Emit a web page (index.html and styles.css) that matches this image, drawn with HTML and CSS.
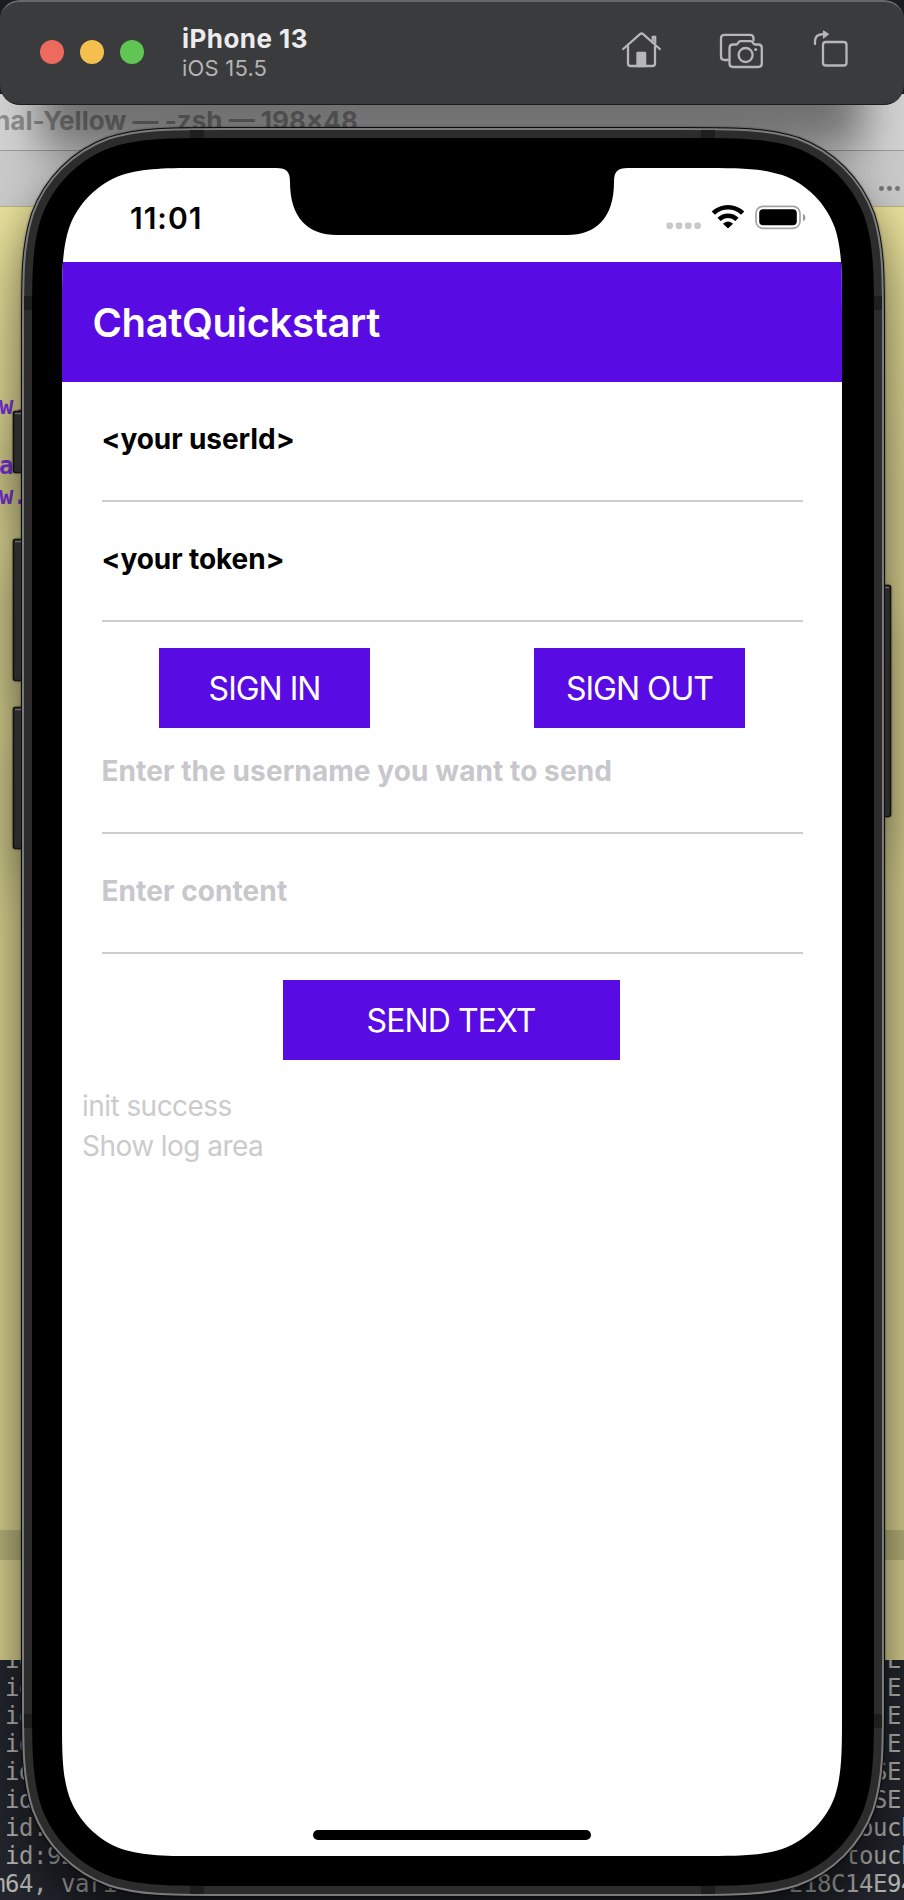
FILE: index.html
```html
<!DOCTYPE html>
<html lang="en">
<head>
<meta charset="utf-8">
<title>iPhone 13 – ChatQuickstart</title>
<link rel="stylesheet" href="styles.css">
</head>
<body>
<div class="desktop">
  <section class="console">
    <pre class="console-text console-left"> id
 id
 id
 id
 id
 id
 id:
 id:92
m64, vari</pre>
    <pre class="console-text console-right">       E
       E
       E
       E
      SE
      SE
    touch
    touch
218C14E94</pre>
  </section>

  <section class="terminal">
    <div class="terminal-title"><span class="terminal-name">nal-Yellow — -zsh — 198×48</span></div>
    <div class="terminal-tabs"><i></i><i></i><i></i></div>
    <div class="terminal-body">
      <pre class="terminal-code">w.

a
w.</pre>
      <div class="terminal-row"></div>
    </div>
  </section>

  <div class="toolbar-shadow"></div>

  <svg class="shell" viewBox="0 0 904 1900" width="904" height="1900">
    <defs>
      <path id="body" d="M223.1 138H682.9c55 0 82.5 0 112.1 9.4c32.3 11.8 57.8 37.2 69.6 69.6c9.4 29.6 9.4 57.1 9.4 112.1V1694.9c0 55 0 82.5 -9.4 112.1c-11.8 32.3 -37.2 57.8 -69.6 69.6c-29.6 9.4 -57.1 9.4 -112.1 9.4H223.1c-55 0 -82.5 0 -112.1 -9.4c-32.3 -11.8 -57.8 -37.2 -69.6 -69.6c-9.4 -29.6 -9.4 -57.1 -9.4 -112.1V329.1c0 -55 0 -82.5 9.4 -112.1c11.8 -32.3 37.2 -57.8 69.6 -69.6c29.6 -9.4 57.1 -9.4 112.1 -9.4z"/>
    </defs>
    <g fill="#2b2b2b" stroke="#111" stroke-width="1.5">
      <rect x="13.5" y="411.5" width="14" height="61" rx="2"/>
      <rect x="13.5" y="539.5" width="14" height="141" rx="2"/>
      <rect x="13.5" y="707.5" width="14" height="141" rx="2"/>
      <rect x="878" y="585.5" width="12.5" height="231" rx="2"/>
    </g>
    <path d="M15 413.5h8M15 541.5h8M15 709.5h8M884 587.5h5" stroke="#666" stroke-width="1.5"/>
    <use href="#body" stroke="#0c0c0c" stroke-width="22"/>
    <use href="#body" stroke="#7b7b7b" stroke-width="20"/>
    <use href="#body" stroke="#2c2c2c" stroke-width="16"/>
    <path d="M190 130h14v8h-14zM701 130h14v8h-14zM190 1886h14v8h-14zM701 1886h14v8h-14zM24 296h8v14h-8zM874 296h8v14h-8zM24 1714h8v14h-8zM874 1714h8v14h-8z" fill="#1e1e1e"/>
    <use href="#body" fill="#000"/>
  </svg>

  <main class="screen">
    <div class="status">
      <span class="clock">11:01</span>
      <svg class="status-icons" viewBox="0 0 144 30" width="144" height="30">
        <g fill="#c9c9c9"><rect x="4.500" y="19.500" width="6.400" height="6.400" rx="1.800"/><rect x="13.800" y="19.500" width="6.400" height="6.400" rx="1.800"/><rect x="23.100" y="19.500" width="6.400" height="6.400" rx="1.800"/><rect x="32.400" y="19.500" width="6.400" height="6.400" rx="1.800"/></g>
        <g fill="none" stroke="#000" stroke-width="4.600"><path d="M51.300 10.200a21 21 0 0 1 29.400 0"/><path d="M57 16.300a13 13 0 0 1 18 0"/></g>
        <path d="M61.500 20.800q4.500-3.600 9 0L66 25z" stroke="#000" stroke-linejoin="round"/>
        <rect x="94" y="3.300" width="44" height="22" rx="7" fill="none" stroke="#a3a3a3" stroke-width="1.700"/>
        <rect x="97.200" y="6.300" width="37.600" height="16" rx="4"/>
        <path d="M141 11c3.200 1 3.200 6.200 0 7.200z" fill="#999"/>
      </svg>
    </div>
    <header class="app-bar"><h1>ChatQuickstart</h1></header>
    <form class="form">
      <div class="field"><span>&lt;your userId&gt;</span></div>
      <div class="field"><span>&lt;your token&gt;</span></div>
      <div class="actions">
        <button type="button" class="btn">SIGN IN</button>
        <button type="button" class="btn">SIGN OUT</button>
      </div>
      <div class="field placeholder"><span>Enter the username you want to send</span></div>
      <div class="field placeholder"><span>Enter content</span></div>
      <div class="actions actions-single">
        <button type="button" class="btn btn-wide">SEND TEXT</button>
      </div>
    </form>
    <div class="log">
      <p>init success</p>
      <p>Show log area</p>
    </div>
    <div class="home-indicator"></div>
  </main>

  <div class="toolbar">
    <div class="lights"><i class="red"></i><i class="amber"></i><i class="green"></i></div>
    <div class="device"><strong>iPhone 13</strong><span>iOS 15.5</span></div>
    <svg class="tools" viewBox="612 24 244 52" width="244" height="52" fill="none" stroke="#b7b7b9" stroke-width="2.300" stroke-linecap="round" stroke-linejoin="round">
      <path d="M623.200 49L640 34.200q1.600-1.400 3.200 0L659.800 49"/>
      <path d="M628 46.500V63.500q0 2.500 2.500 2.500h22q2.500 0 2.500-2.500V46.500"/>
      <path d="M652.700 41v-4.200h2.500v6.500" />
      <path d="M637.500 66V53h7.600v13z" fill="#b7b7b9"/>
      <path d="M728 60h-3.500q-3.500 0-3.500-3.500V38.300q0-3.500 3.500-3.500h25.500q3.500 0 3.500 3.500v2"/>
      <path d="M733 44.500h3.200q1 0 1.500-.8l1-1.600q.6-1 1.800-1h10.300q1.200 0 1.800 1l1 1.600q.5.800 1.500.8h3.200q3.500 0 3.500 3.500v15.500q0 3.500-3.500 3.500H733q-3.500 0-3.500-3.500V48q0-3.500 3.500-3.500z"/>
      <circle cx="745.600" cy="55" r="7"/>
      <circle cx="755.600" cy="49.600" r="1.500" fill="#b7b7b9" stroke="none"/>
      <rect x="823" y="42" width="23.500" height="23.500" rx="2.800"/>
      <path d="M815 44v-2.500q0-7.300 8.500-7.300"/>
      <path d="M823.500 31l4.800 3.300l-4.800 3.500z" fill="#b7b7b9" stroke-width="1.200"/>
    </svg>
  </div>
</div>
</body>
</html>
```
FILE: styles.css
```css
* { box-sizing: border-box; }

body {
  margin: 0;
  font-family: Inter, "Liberation Sans", sans-serif;
}

p, h1, pre { margin: 0; }

.desktop {
  position: relative;
  width: 904px;
  height: 1900px;
  overflow: hidden;
  background: #1b1d24;
}

/* Background windows */
.console {
  position: absolute;
  left: 0;
  top: 1652px;
  width: 904px;
  height: 248px;
  overflow: hidden;
  background: #24262e;
}

.console-text {
  position: absolute;
  top: -6px;
  font: 24px/28px "DejaVu Sans Mono", monospace;
  letter-spacing: -0.45px;
  color: #b8b8b4;
}

.console-left { left: -9px; }
.console-right { left: 789px; }

.terminal {
  position: absolute;
  left: 0;
  top: 94px;
  width: 904px;
  height: 1566px;
  display: flex;
  flex-direction: column;
  overflow: hidden;
}

.terminal-title {
  height: 57px;
  background: #d2d2d2;
  border-bottom: 1px solid #9a9a9a;
  display: flex;
}

.terminal-name {
  width: 358px;
  display: flex;
  justify-content: flex-end;
  white-space: nowrap;
  font-size: 26px;
  font-weight: 700;
  line-height: 53px;
  color: #8e8e8e;
}

.terminal-tabs {
  height: 55px;
  background: #cacaca;
  display: flex;
  justify-content: flex-end;
  align-items: flex-start;
  gap: 3.4px;
  padding: 35px 4px 0 0;
}

.terminal-tabs i {
  width: 4.8px;
  height: 4.8px;
  border-radius: 50%;
  background: #777;
}

.terminal-body {
  flex: 1;
  background: linear-gradient(#e9e29c, #d9d290 280px);
  border-top: 1px solid #b9b37c;
  padding-top: 184px;
}

.terminal-code {
  height: 1139px;
  margin-left: -1px;
  font: bold 24px/30px "DejaVu Sans Mono", monospace;
  letter-spacing: -0.45px;
  color: #7a35d8;
}

.terminal-row {
  height: 30px;
  background: rgba(0, 0, 0, 0.14);
}

.toolbar-shadow {
  position: absolute;
  left: 40px;
  top: 20px;
  width: 824px;
  height: 130px;
  background: rgba(0, 0, 0, 0.46);
  filter: blur(22px);
}

/* Simulated device */
.shell {
  position: absolute;
  left: 0;
  top: 0;
  filter: drop-shadow(0 0 1px rgba(0, 0, 0, 0.5)) drop-shadow(0 30px 26px rgba(0, 0, 0, 0.6));
}

.screen {
  position: absolute;
  left: 62px;
  top: 168px;
  width: 780px;
  height: 1688px;
  display: flex;
  flex-direction: column;
  background: #fff;
  clip-path: path("M144.8 0H214C225 0 228 4 228 14C228 50 246 67 275 67H505C534 67 552 50 552 14C552 4 555 0 566 0H635.2c41.7 0 62.5 0 85 7.1c24.5 8.9 43.800 28.2 52.7 52.7c7.1 22.4 7.1 43.3 7.1 85V1543.2c0 41.7 0 62.5 -7.1 85c-8.9 24.5 -28.2 43.8 -52.7 52.7c-22.4 7.1 -43.3 7.1 -85 7.1H144.8c-41.7 0 -62.5 0 -85 -7.1c-24.5 -8.9 -43.8 -28.2 -52.7 -52.7c-7.1 -22.4 -7.1 -43.3 -7.1 -85V144.8c0 -41.7 0 -62.5 7.1 -85c8.9 -24.5 28.2 -43.8 52.7 -52.7c22.4 -7.1 43.3 -7.1 85 -7.1z");
}

.status {
  height: 94px;
  display: flex;
  justify-content: space-between;
  padding: 35px 36px 0 68px;
}

.clock {
  font-size: 30px;
  font-weight: 600;
  line-height: 30px;
  letter-spacing: 1px;
}

.app-bar {
  height: 120px;
  padding-left: 30.5px;
  background: #590be4;
  color: #fff;
}

.app-bar h1 {
  font-size: 40px;
  font-weight: 600;
  line-height: 121px;
  letter-spacing: -0.4px;
}

.field {
  height: 120px;
  margin: 0 39px 0 39.5px;
  border-bottom: 2px solid #cecece;
  padding-top: 40px;
  font-size: 28px;
  font-weight: 700;
  line-height: 34px;
  letter-spacing: -0.08px;
  white-space: nowrap;
  color: #000;
}

.placeholder {
  letter-spacing: 0.09px;
  color: #c7c7cc;
}

.actions {
  height: 92px;
  padding: 26px 15px 0;
  display: flex;
  justify-content: space-around;
}

.actions-single { padding-right: 17px; }

.btn {
  width: 211px;
  height: 80px;
  padding: 0;
  border: 0;
  background: #590be4;
  color: #fff;
  font: 400 32px/82px Inter, "Liberation Sans", sans-serif;
  letter-spacing: -1px;
}

.btn-wide {
  width: 337px;
  letter-spacing: -0.9px;
}

.log {
  padding: 40px 20px;
  font-size: 28px;
  line-height: 40px;
  font-weight: 400;
  letter-spacing: -0.55px;
  color: #cbcbcb;
}

.home-indicator {
  width: 278px;
  height: 10px;
  margin: auto auto 16px;
  border-radius: 5px;
  background: #000;
}

/* Simulator toolbar */
.toolbar {
  position: absolute;
  left: 0;
  top: 0;
  width: 904px;
  height: 105px;
  display: flex;
  align-items: flex-start;
  background: #3a3b3c;
  border-top: 2px solid #68696b;
  border-bottom: 1px solid #1c1c1c;
  border-radius: 20px;
}

.lights {
  display: flex;
  gap: 16px;
  padding: 38px 0 0 40px;
}

.lights i {
  width: 24px;
  height: 24px;
  border-radius: 50%;
}

.red { background: #ed6a5e; }
.amber { background: #f4bf4f; }
.green { background: #61c554; }

.device {
  display: flex;
  flex-direction: column;
  padding: 21px 0 0 38px;
  width: 468px;
}

.device strong {
  font-size: 26px;
  line-height: 32px;
  letter-spacing: 0.45px;
  color: #ececec;
}

.device span {
  font-size: 22px;
  line-height: 26px;
  letter-spacing: 0.2px;
  color: #b4b4b6;
}

.tools { margin-top: 22px; }
```
